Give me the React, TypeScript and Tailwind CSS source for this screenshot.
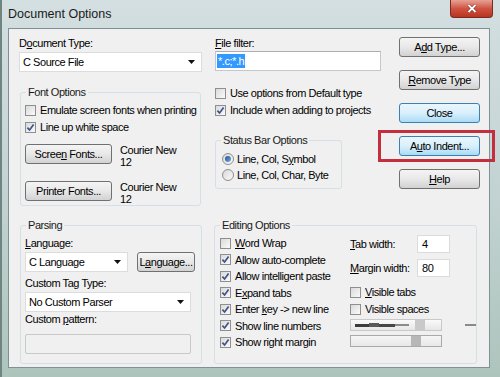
import type { ReactNode } from 'react';

function U({ children }: { children: ReactNode }) {
  return <span className="underline underline-offset-[1px] decoration-[1px]">{children}</span>;
}

function Check({ checked = false, children, className = '' }: { checked?: boolean; children: ReactNode; className?: string }) {
  return (
    <div className={`flex items-center gap-[4px] ${className}`}>
      <span className="size-[11px] shrink-0 border border-[#8f8f8f] bg-linear-to-br from-[#dadada] to-[#fafafa] flex items-center justify-center">
        {checked && (
          <svg viewBox="0 0 9 9" className="size-[9px]">
            <path d="M1.4 4.6 L3.6 7 L7.6 1.6" fill="none" stroke="#3d5488" strokeWidth="1.7" />
          </svg>
        )}
      </span>
      <span className="whitespace-nowrap">{children}</span>
    </div>
  );
}

function Radio({ checked = false, children }: { checked?: boolean; children: ReactNode }) {
  return (
    <div className="flex items-center gap-[3px] h-[16px]">
      <span className="size-[12px] shrink-0 rounded-full border border-[#8f8f8f] bg-linear-to-br from-[#d8d8d8] to-[#fbfbfb] flex items-center justify-center">
        {checked && <span className="size-[6px] rounded-full bg-linear-to-br from-[#1c4f8f] to-[#78b2e2]" />}
      </span>
      <span className="whitespace-nowrap">{children}</span>
    </div>
  );
}

function Btn({ children, blue = false, className = '' }: { children: ReactNode; blue?: boolean; className?: string }) {
  return (
    <div
      className={`h-[20px] flex items-center justify-center rounded-[3px] border ${
        blue
          ? 'border-[#3c7fb1] bg-linear-to-b from-[#eaf6fd] via-[#d9f0fc] to-[#a9dbf6]'
          : 'border-[#707070] bg-linear-to-b from-[#f4f4f4] via-[#e8e8e8] to-[#d2d2d2]'
      } ${className}`}
    >
      <span className="whitespace-nowrap">{children}</span>
    </div>
  );
}

function Combo({ value, className = '' }: { value: string; className?: string }) {
  return (
    <div className={`h-[20px] flex items-center bg-white border border-[#dcdcdc] pl-[3px] pr-[6px] ${className}`}>
      <span className="flex-1 whitespace-nowrap">{value}</span>
      <svg viewBox="0 0 7 4" className="w-[7px] h-[4px]">
        <path d="M0 0 H7 L3.5 4 Z" fill="#111" />
      </svg>
    </div>
  );
}

function Group({ title, className = '', children }: { title: string; className?: string; children: ReactNode }) {
  return (
    <div className={`relative border border-[#d5dfe5] rounded-[3px] ${className}`}>
      <span className="absolute -top-[8px] left-[5px] bg-[#f0f0f0] px-[2px] leading-[14px] text-[#1a1a1a]">{title}</span>
      {children}
    </div>
  );
}

export default function App() {
  return (
    <div className="w-[500px] h-[377px] relative flex flex-col overflow-hidden bg-linear-to-b from-[#d3dfe1] via-[#c3d3d3] to-[#adc4bc] border-l-[2px] border-[#6f8582] text-[11px] tracking-[-0.45px] text-black font-['Liberation_Sans',Arial,sans-serif]">
      {/* title bar */}
      <div className="h-[28px] shrink-0 flex items-start">
        <span className="ml-[6px] mt-[5px] text-[12.5px] tracking-normal text-[#1b1b1b]">Document Options</span>
        <div className="ml-auto mr-[7px] w-[43px] h-[18px] rounded-b-[4px] border border-t-0 border-[#7b2a22] bg-linear-to-b from-[#e6a196] via-[#cf5340] to-[#b83420] flex items-center justify-center">
          <svg viewBox="0 0 10 9" className="w-[10px] h-[9px]">
            <path d="M1.5 1 L8.5 8 M8.5 1 L1.5 8" stroke="#6b1c14" strokeWidth="3" />
            <path d="M1.5 1 L8.5 8 M8.5 1 L1.5 8" stroke="#ffffff" strokeWidth="2" />
          </svg>
        </div>
      </div>

      {/* client area */}
      <div className="ml-[6px] mr-[10px] h-[340px] bg-[#f0f0f0] border border-[#7f9193] flex flex-col">
        {/* top section */}
        <div className="h-[196px] flex pl-[10px]">
          {/* column A */}
          <div className="w-[183px] flex flex-col">
            <div className="mt-[7px] h-[14px] leading-[14px]">
              D<U>o</U>cument Type:
            </div>
            <Combo value="C Source File" className="mt-[2px]" />
            <Group title="Font Options" className="mt-[20px] h-[114px] ml-[1px] w-[181px] flex flex-col pl-[4px]">
              <Check className="mt-[9px] h-[16px]">Emulate screen fonts when printing</Check>
              <Check checked className="mt-[1px] h-[16px]">
                Line up white space
              </Check>
              <div className="mt-[9px] flex items-start gap-[8px]">
                <Btn className="w-[87px]">
                  Scree<U>n</U> Fonts...
                </Btn>
                <div className="leading-[12px]">
                  <div>Courier New</div>
                  <div>12</div>
                </div>
              </div>
              <div className="mt-[13px] flex items-start gap-[8px]">
                <Btn className="w-[87px]">Printer Fonts...</Btn>
                <div className="leading-[12px]">
                  <div>Courier New</div>
                  <div>12</div>
                </div>
              </div>
            </Group>
          </div>

          {/* column B */}
          <div className="ml-[13px] w-[166px] flex flex-col">
            <div className="mt-[7px] h-[14px] leading-[14px]">
              <U>F</U>ile filter:
            </div>
            <div className="mt-[1px] h-[20px] bg-white border border-[#c4c8cc] border-t-[#abadb3] flex items-center pl-[1px]">
              <span className="bg-[#3399ff] text-white px-[1px] leading-[14px]">*.c;*.h</span>
            </div>
            <Check className="mt-[14px] h-[16px]">Use options from Default type</Check>
            <Check checked className="mt-[1px] h-[16px]">
              Include when adding to projects
            </Check>
            <Group title="Status Bar Options" className="mt-[22px] w-[127px] h-[49px] flex flex-col pl-[6px]">
              <div className="mt-[10px]">
                <Radio checked>
                  Line, Col, S<U>y</U>mbol
                </Radio>
              </div>
              <Radio>Line, Col, Char, Byte</Radio>
            </Group>
          </div>

          {/* buttons */}
          <div className="ml-[18px] w-[81px] pt-[8px] flex flex-col gap-[13px]">
            <Btn>
              A<U>d</U>d Type...
            </Btn>
            <Btn>
              <U>R</U>emove Type
            </Btn>
            <Btn blue>Close</Btn>
            <Btn blue>
              A<U>u</U>to Indent...
            </Btn>
            <Btn>
              <U>H</U>elp
            </Btn>
          </div>
        </div>

        {/* bottom section */}
        <div className="flex pl-[11px] gap-[12px]">
          <Group title="Parsing" className="w-[182px] h-[139px] flex flex-col pl-[4px]">
            <div className="mt-[10px] h-[14px] leading-[14px]">
              <U>L</U>anguage:
            </div>
            <div className="mt-[2px] flex gap-[9px]">
              <Combo value="C Language" className="w-[103px]" />
              <Btn className="w-[58px] border-[#555]">
                L<U>a</U>nguage...
              </Btn>
            </div>
            <div className="mt-[4px] h-[14px] leading-[14px]">Custom Tag Type:</div>
            <Combo value="No Custom Parser" className="mt-[2px] w-[166px]" />
            <div className="h-[14px] leading-[14px]">
              Custom <U>p</U>attern:
            </div>
            <div className="mt-[8px] w-[166px] h-[20px] rounded-[2px] border border-[#c9c9c9] bg-[#f0f0f0]" />
          </Group>

          <Group title="Editing Options" className="w-[263px] h-[139px] flex pl-[5px]">
            <div className="w-[132px] pt-[9px] flex flex-col">
              <Check className="h-[16.5px]">
                <U>W</U>ord Wrap
              </Check>
              <Check checked className="h-[16.5px]">
                Allow auto-complete
              </Check>
              <Check checked className="h-[16.5px]">
                Allow intelligent paste
              </Check>
              <Check checked className="h-[16.5px]">
                E<U>x</U>pand tabs
              </Check>
              <Check checked className="h-[16.5px]">
                Enter <U>k</U>ey -&gt; new line
              </Check>
              <Check checked className="h-[16.5px]">
                Show line numbers
              </Check>
              <Check checked className="h-[16.5px]">
                Show right margin
              </Check>
            </div>
            <div className="flex-1 pt-[9px] flex flex-col">
              <div className="h-[18px] flex items-center">
                <span className="w-[67px]">
                  <U>T</U>ab width:
                </span>
                <div className="w-[33px] h-[18px] bg-white border border-[#dcdcdc] flex items-center pl-[4px]">4</div>
              </div>
              <div className="mt-[6px] h-[18px] flex items-center">
                <span className="w-[67px]">
                  <U>M</U>argin width:
                </span>
                <div className="w-[33px] h-[18px] bg-white border border-[#dcdcdc] flex items-center pl-[4px]">80</div>
              </div>
              <Check className="mt-[7px] h-[16px]">
                <U>V</U>isible tabs
              </Check>
              <Check className="mt-[1px] h-[16px]">Visible spaces</Check>
              <div className="mt-[2px] flex items-center">
                <div className="w-[92px] h-[12px] border border-[#c9c9c9] bg-linear-to-b from-[#fafafa] to-[#e6e6e6] flex items-center">
                  <div className="ml-[4px] w-[14px] h-[3px] bg-[#3c3c3c]" />
                  <div className="w-[10px] h-[4px] bg-[#5a5a5a]" />
                  <div className="w-[16px] h-[3px] bg-[#474747]" />
                  <div className="w-[14px] h-[2px] bg-[#8a8a8a]" />
                  <div className="ml-[6px] w-[10px] h-[10px] bg-[#c9c9c9]" />
                </div>
                <div className="ml-[23px] w-[11px] h-[2px] bg-[#8a8a8a]" />
              </div>
              <div className="mt-[4px] w-[92px] h-[12px] border border-[#a9a9a9] bg-linear-to-b from-[#f5f5f5] to-[#e8e8e8] flex items-center">
                <div className="ml-[60px] w-[10px] h-[10px] bg-[#b7b7b7]" />
              </div>
            </div>
          </Group>
        </div>
      </div>

      {/* annotation */}
      <div className="absolute left-[376px] top-[130px] w-[117px] h-[32px] border-[3px] border-[#c42f3d]" />
    </div>
  );
}
